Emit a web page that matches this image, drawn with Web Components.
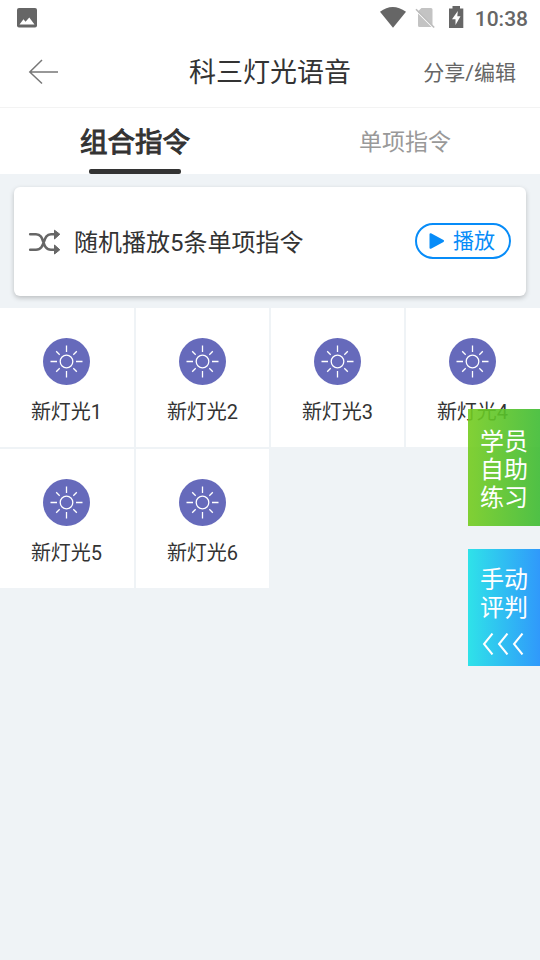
<!DOCTYPE html>
<html lang="zh-CN">
<head>
<meta charset="utf-8">
<title>科三灯光语音</title>
<style>
html,body{margin:0;height:100%}
body{background:#eff3f6;font-family:Roboto,"Noto Sans CJK SC",sans-serif;color:#333;overflow:hidden}
</style>
</head>
<body>
<light-app></light-app>
<script>
function define(name, markup) {
  const t = document.createElement('template');
  t.innerHTML = '<style>*{box-sizing:border-box}svg{display:block;flex:none}</style>' + markup;
  customElements.define(name, class extends HTMLElement {
    constructor() {
      super();
      this.attachShadow({mode: 'open'}).append(t.content.cloneNode(true));
    }
  });
}

define('status-bar', `
<style>
:host{display:flex;align-items:center;height:36px;padding:0 12px 0 17px;background:#fff;color:#666}
.right{margin-left:auto;display:flex;align-items:center}
.time{font-size:21px;font-weight:500;line-height:36px;margin-left:8px;padding-top:2px}
</style>
<svg width="20" height="20" viewBox="0 0 20 20"><rect width="20" height="19.5" rx="2" fill="#666"/><path d="M2.5 16.5 6.5 11.3 8.5 13.7 12.3 9.5 17.5 16.5Z" fill="#fff"/></svg>
<div class="right">
<svg width="92" height="24" viewBox="0 0 92 24"><path d="M5 5.8Q17.5-3.8 31 5.8L18 21.7Z" fill="#666"/><path d="M46.5 2H56Q57.5 2 57.5 3.5V19L42.5 5.8ZM43 7.5 56.5 21H44.5Q43 21 43 19.5Z" fill="#c3c3c3"/><path d="M41 3.3 59.2 21.5" stroke="#bbb" stroke-width="1.6"/><path d="M74 2.4H77.5V0H85V2.4H88.3V22H74Z" fill="#666"/><path d="M82.8 5 77 13.2H80.5V19L85.5 10.2H82.3Z" fill="#fff"/></svg>
<span class="time">10:38</span></div>`);

define('title-bar', `
<style>
:host{display:grid;grid-template-columns:160px 1fr 160px;align-items:center;height:72px;background:#fff;border-bottom:1px solid #f3f3f3}
svg{margin-left:28px}
.title{font-size:27px;text-align:center;line-height:40px;white-space:nowrap;padding-top:3px}
.action{text-align:right;padding-right:24px;color:#666;font-size:21px;line-height:32px;padding-top:3px}
</style>
<svg width="31" height="26" viewBox="0 0 31 26" fill="none" stroke="#777" stroke-width="1.5"><path d="M30 13H2M14 1 1.8 13 14 24.5"/></svg>
<div class="title"><slot></slot></div>
<div class="action"><slot name="action"></slot></div>`);

define('tab-item', `
<style>
:host{display:flex;flex-direction:column;align-items:center;flex:1;height:66px;color:#999;font-size:23px}
:host([active]){color:#333;font-size:27.5px;-webkit-text-stroke:1px #333}
.label{height:61px;line-height:70px}
i{display:none;width:92px;height:5px;border-radius:2px;background:#333}
:host([active]) i{display:block}
</style>
<div class="label"><slot></slot></div><i></i>`);

define('tab-bar', `<style>:host{display:flex;height:66px;background:#fff}</style><slot></slot>`);

define('play-button', `
<style>
:host{display:flex;align-items:center;width:96px;height:36px;border:2px solid #078cf8;border-radius:18px;padding-left:12px;box-sizing:border-box;color:#078cf8;font-size:21px;line-height:32px}
svg{margin-right:8px}
</style>
<svg width="16" height="18" viewBox="0 0 16 18"><path d="M1.5 2.2 14 9 1.5 15.8Z" fill="#078cf8" stroke="#078cf8" stroke-width="2" stroke-linejoin="round"/></svg>
<slot></slot>`);

define('random-card', `
<style>
:host{display:flex;align-items:center;height:109px;margin:13px 14px 12px;padding:0 15px 0 14px;border-radius:6px;background:#fff;box-shadow:0 2px 5px rgba(0,0,0,.22);font-size:24px}
.text{margin-left:13px;line-height:36px;padding-top:3px}
play-button{margin-left:auto;margin-bottom:1px}
</style>
<svg width="33" height="26" viewBox="0 0 33 26"><g fill="none" stroke="#666" stroke-width="2.6" stroke-linecap="round"><path d="M2.2 5.2H8C17.5 5.2 13 20.8 23 20.8H27M2.2 20.8H8C18 20.8 14 5.2 23 5.2H27"/></g><path d="M26.5 1.2 31.8 5.2 26.5 10ZM26.5 16 31.8 20.8 26.5 25Z" fill="#666" stroke="#666" stroke-linejoin="round"/></svg>
<div class="text"><slot></slot></div>
<play-button>播放</play-button>`);

define('light-cell', `
<style>
:host{display:flex;flex-direction:column;align-items:center;height:139px;padding:30px 1px 0 0;background:#fff;font-size:20px}
span{margin-top:12px;line-height:31px}
</style>
<svg width="47" height="47" viewBox="0 0 47 47"><circle cx="23.5" cy="23.5" r="23.5" fill="#666abb"/><g fill="none" stroke="#fff" stroke-width="1.3"><circle cx="23.5" cy="23.5" r="6.3"/><path d="M23.5 7.5V14M23.5 33V39.5M7.5 23.5H14M33 23.5H39.5M13.2 13.2 16.7 16.7M30.3 30.3 33.8 33.8M33.8 13.2 30.3 16.7M16.7 30.3 13.2 33.8"/></g></svg>
<span><slot></slot></span>`);

define('light-grid', `<style>:host{display:grid;grid-template-columns:134px 133px 133px 134px;gap:2px}::slotted(:nth-child(4n+2)),::slotted(:nth-child(4n+3)){padding-right:0}</style><slot></slot>`);

define('side-button', `
<style>
:host{display:block;box-sizing:border-box;width:72px;height:117px;padding-top:19px;color:#fff;font-size:24px;line-height:28px;text-align:center;background:linear-gradient(90deg,rgba(117,204,31,.9),rgba(62,187,51,.9))}
:host([kind=manual]){padding-top:17px;background:linear-gradient(90deg,#2fe2e9,#3099fb)}
svg{display:none;margin:11px 0 0 14px}
:host([kind=manual]) svg{display:block}
</style>
<slot></slot>
<svg width="44" height="22" viewBox="0 0 44 22" fill="none" stroke="#fff" stroke-width="2"><path d="M10.5 0.5 2 11 10.5 21.5M25.5 0.5 17 11 25.5 21.5M40.5 0.5 32 11 40.5 21.5"/></svg>`);

define('light-app', `
<style>
:host{display:block;position:relative;width:540px;height:960px}
aside{position:absolute;right:0;top:409px;display:grid;gap:23px}
</style>
<status-bar></status-bar>
<title-bar>科三灯光语音<span slot="action">分享/编辑</span></title-bar>
<tab-bar><tab-item active>组合指令</tab-item><tab-item>单项指令</tab-item></tab-bar>
<random-card>随机播放5条单项指令</random-card>
<light-grid>
<light-cell>新灯光1</light-cell><light-cell>新灯光2</light-cell><light-cell>新灯光3</light-cell><light-cell>新灯光4</light-cell><light-cell>新灯光5</light-cell><light-cell>新灯光6</light-cell>
</light-grid>
<aside><side-button>学员<br>自助<br>练习</side-button><side-button kind="manual">手动<br>评判</side-button></aside>`);
</script>
</body>
</html>
